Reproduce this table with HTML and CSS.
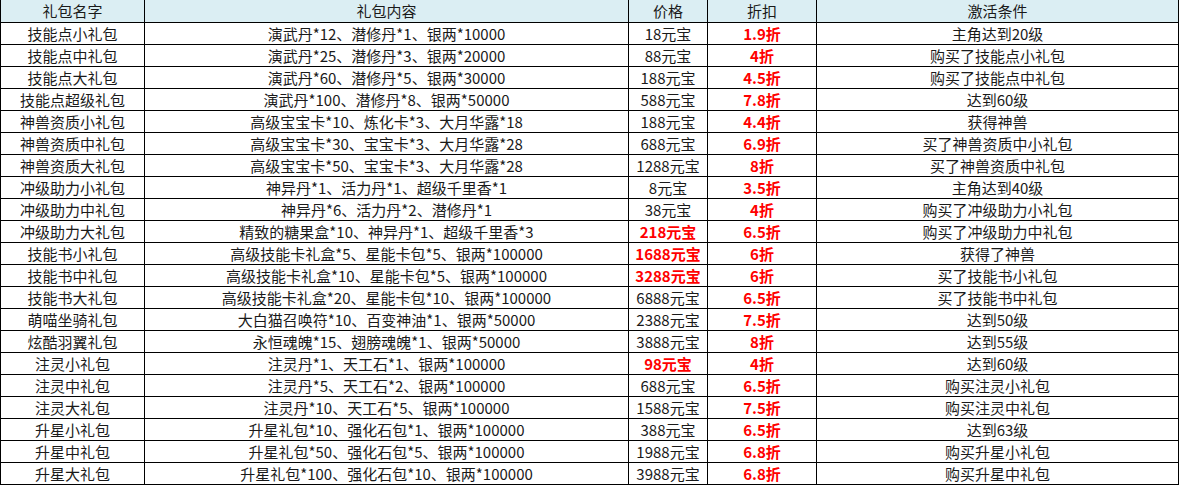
FILE: index.html
```html
<!DOCTYPE html>
<html lang="zh">
<head>
<meta charset="utf-8">
<link rel="stylesheet" href="styles.css">
</head>
<body>
<table class="gift-table">
  <colgroup>
    <col class="c-name"><col class="c-content"><col class="c-price"><col class="c-disc"><col class="c-cond">
  </colgroup>
  <thead>
    <tr><th>礼包名字</th><th>礼包内容</th><th>价格</th><th>折扣</th><th>激活条件</th></tr>
  </thead>
  <tbody>
    <tr><td>技能点小礼包</td><td>演武丹*12、潜修丹*1、银两*10000</td><td>18元宝</td><td class="red">1.9折</td><td>主角达到20级</td></tr>
    <tr><td>技能点中礼包</td><td>演武丹*25、潜修丹*3、银两*20000</td><td>88元宝</td><td class="red">4折</td><td>购买了技能点小礼包</td></tr>
    <tr><td>技能点大礼包</td><td>演武丹*60、潜修丹*5、银两*30000</td><td>188元宝</td><td class="red">4.5折</td><td>购买了技能点中礼包</td></tr>
    <tr><td>技能点超级礼包</td><td>演武丹*100、潜修丹*8、银两*50000</td><td>588元宝</td><td class="red">7.8折</td><td>达到60级</td></tr>
    <tr><td>神兽资质小礼包</td><td>高级宝宝卡*10、炼化卡*3、大月华露*18</td><td>188元宝</td><td class="red">4.4折</td><td>获得神兽</td></tr>
    <tr><td>神兽资质中礼包</td><td>高级宝宝卡*30、宝宝卡*3、大月华露*28</td><td>688元宝</td><td class="red">6.9折</td><td>买了神兽资质中小礼包</td></tr>
    <tr><td>神兽资质大礼包</td><td>高级宝宝卡*50、宝宝卡*3、大月华露*28</td><td>1288元宝</td><td class="red">8折</td><td>买了神兽资质中礼包</td></tr>
    <tr><td>冲级助力小礼包</td><td>神异丹*1、活力丹*1、超级千里香*1</td><td>8元宝</td><td class="red">3.5折</td><td>主角达到40级</td></tr>
    <tr><td>冲级助力中礼包</td><td>神异丹*6、活力丹*2、潜修丹*1</td><td>38元宝</td><td class="red">4折</td><td>购买了冲级助力小礼包</td></tr>
    <tr><td>冲级助力大礼包</td><td>精致的糖果盒*10、神异丹*1、超级千里香*3</td><td class="red">218元宝</td><td class="red">6.5折</td><td>购买了冲级助力中礼包</td></tr>
    <tr><td>技能书小礼包</td><td>高级技能卡礼盒*5、星能卡包*5、银两*100000</td><td class="red">1688元宝</td><td class="red">6折</td><td>获得了神兽</td></tr>
    <tr><td>技能书中礼包</td><td>高级技能卡礼盒*10、星能卡包*5、银两*100000</td><td class="red">3288元宝</td><td class="red">6折</td><td>买了技能书小礼包</td></tr>
    <tr><td>技能书大礼包</td><td>高级技能卡礼盒*20、星能卡包*10、银两*100000</td><td>6888元宝</td><td class="red">6.5折</td><td>买了技能书中礼包</td></tr>
    <tr><td>萌喵坐骑礼包</td><td>大白猫召唤符*10、百变神油*1、银两*50000</td><td>2388元宝</td><td class="red">7.5折</td><td>达到50级</td></tr>
    <tr><td>炫酷羽翼礼包</td><td>永恒魂魄*15、翅膀魂魄*1、银两*50000</td><td>3888元宝</td><td class="red">8折</td><td>达到55级</td></tr>
    <tr><td>注灵小礼包</td><td>注灵丹*1、天工石*1、银两*100000</td><td class="red">98元宝</td><td class="red">4折</td><td>达到60级</td></tr>
    <tr><td>注灵中礼包</td><td>注灵丹*5、天工石*2、银两*100000</td><td>688元宝</td><td class="red">6.5折</td><td>购买注灵小礼包</td></tr>
    <tr><td>注灵大礼包</td><td>注灵丹*10、天工石*5、银两*100000</td><td>1588元宝</td><td class="red">7.5折</td><td>购买注灵中礼包</td></tr>
    <tr><td>升星小礼包</td><td>升星礼包*10、强化石包*1、银两*100000</td><td>388元宝</td><td class="red">6.5折</td><td>达到63级</td></tr>
    <tr><td>升星中礼包</td><td>升星礼包*50、强化石包*5、银两*100000</td><td>1988元宝</td><td class="red">6.8折</td><td>购买升星小礼包</td></tr>
    <tr><td>升星大礼包</td><td>升星礼包*100、强化石包*10、银两*100000</td><td>3988元宝</td><td class="red">6.8折</td><td>购买升星中礼包</td></tr>
  </tbody>
</table>
</body>
</html>
```

FILE: styles.css
```css
html, body {
  margin: 0;
  padding: 0;
  background: #ffffff;
}
body {
  font-family: "Noto Sans CJK SC", "Noto Sans", sans-serif;
  font-size: 15px;
  color: #1a1a1a;
}
.gift-table {
  border-collapse: collapse;
  table-layout: fixed;
  width: 1178px;
  margin-top: -1px;
}
.c-name { width: 144px; }
.c-content { width: 484px; }
.c-price { width: 79px; }
.c-disc { width: 109px; }
.c-cond { width: 362px; }
.gift-table th,
.gift-table td {
  border: 1px solid #000000;
  padding: 0;
  height: 21px;
  line-height: 20px;
  text-align: center;
  white-space: nowrap;
  overflow: hidden;
  font-weight: normal;
}
.gift-table thead th {
  background: #dbeef3;
  height: 22px;
}
.gift-table td.red {
  color: #ff0000;
  font-weight: bold;
}
```
